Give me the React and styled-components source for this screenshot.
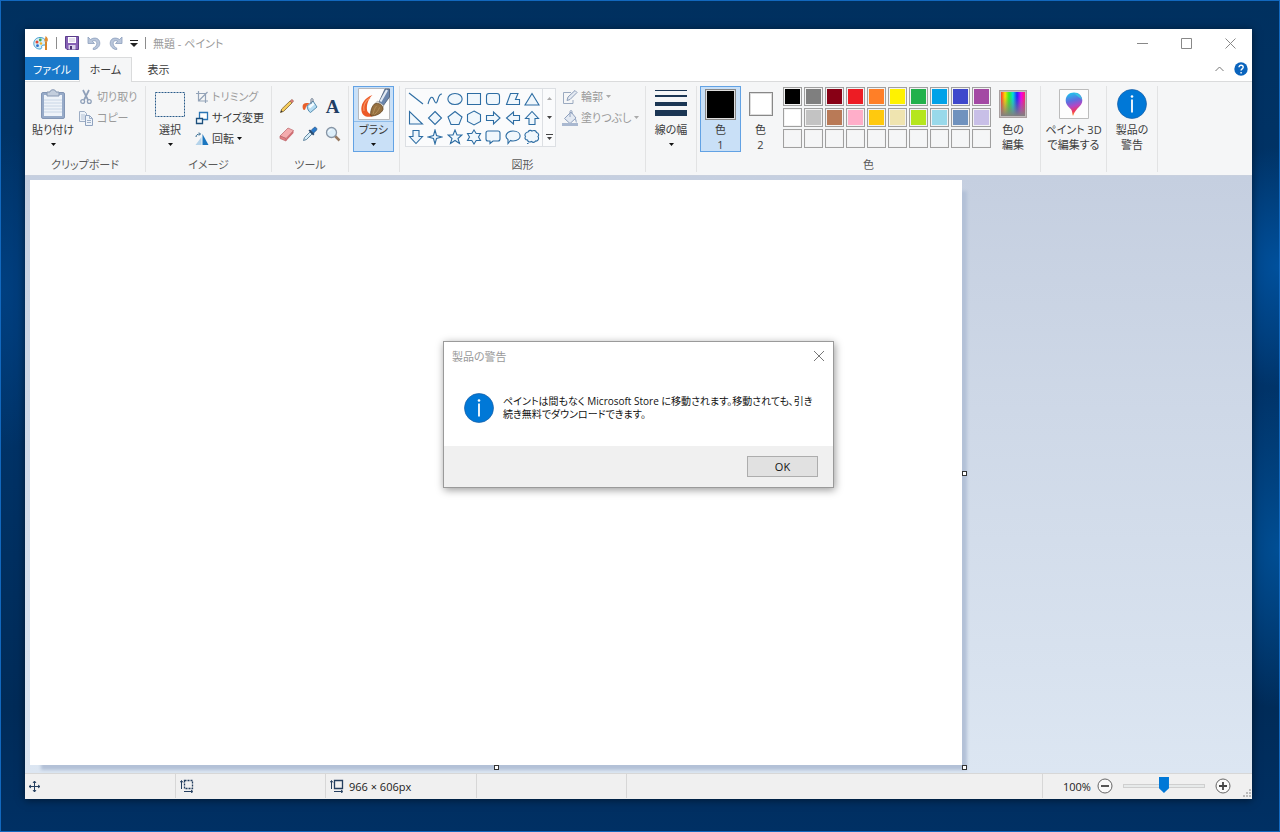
import React, { useState } from "react";
import styled, { createGlobalStyle, css } from "styled-components";

const GlobalStyle = createGlobalStyle`
  * {
    box-sizing: border-box;
  }
  body {
    margin: 0;
  }
  button,
  input {
    font: inherit;
    color: inherit;
    margin: 0;
    padding: 0;
  }
  svg {
    flex-shrink: 0;
  }
`;

const Desktop = styled.div`
  min-height: 100vh;
  display: flex;
  padding: 28px 27px 32px 24px;
  border: 1px solid #1268be;
  background:
    radial-gradient(ellipse 90px 120px at 100% 32%, #00509c, transparent),
    radial-gradient(ellipse 90px 160px at 100% 66%, #004e94, transparent),
    radial-gradient(ellipse 70px 160px at 0% 35%, #003f80, transparent),
    linear-gradient(#00305f, #00356c 40%, #002b58 85%, #003064);
  color: #3c3c3c;
  font-family: "Open Sans", "Noto Sans CJK JP", sans-serif;
  font-size: 11px;
  line-height: 15px;
  font-feature-settings: "palt";
`;

const Window = styled.div`
  position: relative;
  flex: 1;
  min-width: 0;
  display: flex;
  flex-direction: column;
  background: #fff;
  box-shadow: 0 1px 8px rgba(0, 0, 0, 0.5);
`;

const TitleBar = styled.header`
  display: flex;
  align-items: center;
  height: 28px;
  padding-left: 8px;
  gap: 7px;
`;

const PlainButton = styled.button`
  border: 0;
  background: none;
  display: flex;
  align-items: center;
  justify-content: center;
`;

const QuickButton = styled(PlainButton)`
  width: 15px;
`;

const Separator = styled.span`
  width: 1px;
  height: 12px;
  background: #8c8c8c;
`;

const Title = styled.h1`
  margin: 0;
  flex: 1;
  font-size: 11px;
  font-weight: 400;
  color: #999;
`;

const WindowButtons = styled.div`
  display: flex;
`;

const WindowButton = styled(PlainButton)`
  width: 44px;
  height: 28px;
`;

const TabRow = styled.nav`
  display: flex;
  height: 25px;
  border-bottom: 1px solid #dadbdc;
`;

const Tab = styled.button`
  width: 53px;
  height: 25px;
  padding-bottom: 2px;
  border: 1px solid transparent;
  border-bottom: 0;
  background: none;
  white-space: nowrap;

  ${(props) =>
    props.$file &&
    css`
      width: 54px;
      height: 23px;
      padding-bottom: 0;
      background: #1979ca;
      color: #fff;
    `}
  ${(props) =>
    props.$active &&
    css`
      border-color: #dadbdc;
      background: #f5f6f7;
    `}
`;

const TabTools = styled.div`
  display: flex;
  align-items: center;
  gap: 10px;
  margin-left: auto;
  padding-right: 4px;
`;

const Ribbon = styled.div`
  display: flex;
  height: 94px;
  padding: 4px 0 0;
  background: #f5f6f7;
  border-bottom: 1px solid #c8d0de;
`;

const Group = styled.section`
  flex: 0 0 ${(props) => props.$width}px;
  display: flex;
  flex-direction: column;
  border-right: 1px solid #e2e3e4;
  margin-bottom: 3px;
`;

const GroupBody = styled.div`
  display: flex;
  justify-content: ${(props) => (props.$center ? "center" : "flex-start")};
  height: 66px;
  padding-left: ${(props) => (props.$center ? 0 : props.$inset || 4)}px;
  gap: ${(props) => props.$gap || 0}px;
`;

const GroupLabel = styled.div`
  text-align: center;
  line-height: 26px;
  height: 20px;
  color: #5a5a5a;
`;

const BigButton = styled.button`
  display: flex;
  flex-direction: column;
  align-items: center;
  width: ${(props) => props.$width || 44}px;
  height: 66px;
  border: 1px solid ${(props) => (props.$active ? "#62a2e4" : "transparent")};
  background: ${(props) => (props.$active ? "#c9e0f7" : "none")};
  white-space: nowrap;
`;

const BigIcon = styled.span`
  display: flex;
  align-items: center;
  justify-content: center;
  flex: 0 0 35px;
  width: 100%;
  border-bottom: 1px solid ${(props) => (props.$line ? "#8fbdea" : "transparent")};
`;

const SmallColumn = styled.div`
  display: grid;
  grid-auto-rows: 21px;
`;

const SmallButton = styled.button`
  display: flex;
  align-items: center;
  gap: 3px;
  border: 0;
  background: none;
  white-space: nowrap;
  color: ${(props) => (props.disabled ? "#9a9a9a" : "#3c3c3c")};
`;

const ToolGrid = styled.div`
  display: grid;
  grid-template-columns: repeat(3, 23px);
  grid-auto-rows: 28px;
  padding-top: 6px;
`;

const Gallery = styled.div`
  display: flex;
  width: 151px;
  height: 59px;
  margin-top: 2px;
  border: 1px solid #dcdfe3;
  background: #fafbfc;
`;

const ShapeGrid = styled.div`
  flex: 1;
  display: grid;
  grid-template-columns: repeat(7, 1fr);
  grid-template-rows: repeat(3, 1fr);
`;

const GalleryScroll = styled.div`
  width: 13px;
  display: grid;
  grid-template-rows: repeat(3, 1fr);
  border-left: 1px solid #dcdfe3;
`;

const ColorBox = styled.span`
  width: ${(props) => props.$size}px;
  height: ${(props) => props.$size}px;
  border: 1px solid #888;
  background: ${(props) => props.$color};
  box-shadow: inset 0 0 0 1px #ddd;
`;

const Palette = styled.div`
  display: grid;
  grid-template-columns: repeat(10, 19px);
  grid-auto-rows: 19px;
  gap: 2px;
  padding: 1px 0 0 3px;
`;

const Swatch = styled.button`
  border: 1px solid #a0a0a0;
  background: ${(props) => props.$color || "#f5f6f7"};
  box-shadow: inset 0 0 0 1px #f3f3f3;
`;

const Rainbow = styled.span`
  width: 28px;
  height: 28px;
  border: 2px solid #c4bebe;
  outline: 1px solid #a8a0a0;
  outline-offset: -1px;
  background:
    linear-gradient(transparent 20%, #808080),
    linear-gradient(90deg, #f33, #fd0, #3e2, #0dd, #22f, #e0e, #f26);
`;

const Workspace = styled.main`
  flex: 1;
  padding: 4px 5px 8px;
  background: linear-gradient(#c5cfe0, #dce6f2);
`;

const Canvas = styled.div`
  position: relative;
  width: 932px;
  height: 585px;
  background: #fff;
  box-shadow: 8px 8px 3px -3px #b3c1d7;
`;

const Handle = styled.span`
  position: absolute;
  width: 5px;
  height: 5px;
  border: 1px solid #333;
  background: #fff;
  left: ${(props) => props.$left};
  top: ${(props) => props.$top};
`;

const StatusBar = styled.footer`
  display: flex;
  height: 26px;
  padding-bottom: 1px;
  border-top: 1px solid #d7d7d7;
  background: #f0f0f0;
  color: #222;
`;

const StatusCell = styled.div`
  width: ${(props) => props.$width}px;
  flex: ${(props) => (props.$grow ? "1" : "none")};
  display: flex;
  align-items: center;
  gap: 5px;
  padding-left: 4px;
  border-right: 1px solid #d7d7d7;
`;

const ZoomArea = styled.div`
  display: flex;
  align-items: center;
  gap: 6px;
  width: 209px;
  padding-left: 20px;
`;

const ZoomSlider = styled.input`
  appearance: none;
  width: 82px;
  height: 18px;
  margin: 0 4px;
  background: none;

  &::-webkit-slider-runnable-track {
    height: 4px;
    border: 1px solid #cfcfcf;
    background: #e7eaea;
  }
  &::-webkit-slider-thumb {
    appearance: none;
    width: 10px;
    height: 16px;
    margin-top: -8px;
    background: #0078d7;
    clip-path: polygon(0 0, 100% 0, 100% 70%, 50% 100%, 0 70%);
  }
`;

const Grip = styled.span`
  display: flex;
  align-self: flex-end;
  margin-left: auto;
`;

const DialogLayer = styled.div`
  position: absolute;
  inset: 0;
  display: grid;
  place-items: center;
`;

const Dialog = styled.div`
  width: 391px;
  border: 1px solid #9a9a9a;
  background: #fff;
  box-shadow: 1px 2px 8px rgba(0, 0, 0, 0.4);
`;

const DialogTitle = styled.div`
  display: flex;
  justify-content: space-between;
  align-items: center;
  height: 29px;
  padding: 0 8px;
  color: #999;
`;

const DialogBody = styled.div`
  display: flex;
  align-items: center;
  gap: 9px;
  height: 75px;
  padding: 0 20px;
  color: #111;
`;

const DialogText = styled.p`
  margin: 0;
  font-size: 10px;
  line-height: 13px;
  white-space: nowrap;
`;

const DialogFooter = styled.div`
  display: flex;
  justify-content: flex-end;
  align-items: center;
  height: 41px;
  padding-right: 15px;
  background: #f0f0f0;
`;

const OkButton = styled.button`
  width: 71px;
  height: 21px;
  border: 1px solid #adadad;
  background: #e1e1e1;
  color: #111;
`;

const Svg = ({ size = 16, w, h, children, ...rest }) => (
  <svg
    width={w || size}
    height={h || size}
    viewBox={`0 0 ${w || size} ${h || size}`}
    fill="none"
    aria-hidden="true"
    {...rest}
  >
    {children}
  </svg>
);

const Arrow = ({ color = "#111", up }) => (
  <Svg w={5} h={3}>
    <path d={up ? "M0 3h5L2.5 0z" : "M0 0h5L2.5 3z"} fill={color} />
  </Svg>
);

const ArrowRow = styled.span`
  display: flex;
  align-items: center;
  height: 14px;
`;

const InfoIcon = () => (
  <Svg size={30}>
    <circle cx="15" cy="15" r="14.5" fill="#0078d7" stroke="#1a5fa5" strokeWidth="0.7" />
    <circle cx="15" cy="7.500" r="1.300" fill="#fff" />
    <path d="M15 10.500v13" stroke="#fff" strokeWidth="1.800" />
  </Svg>
);

const PaletteIcon = () => (
  <Svg size={16}>
    <path d="M7 2.5C3 2.5.8 5.500.8 8.500c0 3 2.500 5.500 6 5.500 2 0 2-1.400 1.800-2.300-.2-1.200 1-1.700 2.400-1.600C15 10.300 14 2.500 7 2.500z" fill="#d5edf9" stroke="#3f9ccc" />
    <circle cx="4" cy="7" r="1.500" fill="#e24b35" />
    <circle cx="7.300" cy="5" r="1.400" fill="#4aa84a" />
    <circle cx="4.500" cy="10.700" r="1.400" fill="#2c6fc9" />
    <circle cx="8" cy="8.500" r="1.200" fill="#f1b52b" />
    <path d="M13 6.500V15" stroke="#d98628" strokeWidth="2" />
    <path d="M11.500 6.500c-.5-2 1-2.500 1-5.500 2 1 3 3.500 2 5.500z" fill="#e08b31" />
  </Svg>
);

const SaveIcon = () => (
  <Svg size={14}>
    <path d="M.5.5h13v13H2L.5 12z" fill="#8661b5" stroke="#5b3d8c" />
    <path d="M3 1h8v6H3z" fill="#fff" />
    <path d="M4 3h6M4 5h6" stroke="#c9bfdc" />
    <path d="M3.500 9h7v4.500h-7z" fill="#d9d0ea" />
    <path d="M5 10h2v3.500H5z" fill="#493070" />
  </Svg>
);

const UndoIcon = ({ flip }) => (
  <Svg size={14} transform={flip ? "scale(-1 1)" : undefined}>
    <path d="M1 1v6.500h6.500L5.300 5.300c2.500-1.400 4.500-.3 4.500 2.200 0 2-1.300 3.500-3.500 4.500v1.800c4-.8 6.500-3.300 6.500-6.600C12.800 2.500 8 .5 3.500 3.500z" fill="#b9c6db" stroke="#8d9fbd" strokeWidth="0.8" />
  </Svg>
);

const PasteIcon = () => (
  <Svg w={26} h={30}>
    <rect x="1.500" y="3.500" width="23" height="26" rx="1.500" fill="#97abc9" stroke="#8396b5" />
    <path d="M4 6h18v21H4z" fill="#eef3f9" />
    <path d="M4 11h18M4 14h18M4 17h18M4 20h18M4 23h18" stroke="#c9d6e6" />
    <path d="M7 7V3h3c0-3 6-3 6 0h3v4z" fill="#c3cedd" stroke="#8698b3" />
  </Svg>
);

const CutIcon = () => (
  <Svg>
    <path d="M5 1l5 10M11 1L6 11" stroke="#8fa0b9" strokeWidth="1.700" />
    <circle cx="4.700" cy="12.500" r="1.900" stroke="#8fa0b9" strokeWidth="1.300" />
    <circle cx="11.300" cy="12.500" r="1.900" stroke="#8fa0b9" strokeWidth="1.300" />
  </Svg>
);

const CopyIcon = () => (
  <Svg>
    <path d="M1.500 1.500h5l2 2v8h-7z" fill="#eef3f9" stroke="#9dadc4" />
    <path d="M3 5h4M3 7h4M3 9h4" stroke="#b5c3d6" />
    <path d="M7.500 5.500h4l3 3v7h-7z" fill="#eef3f9" stroke="#8fa2bf" />
    <path d="M11.500 5.500v3h3M9 10.500h4M9 12.500h4" stroke="#9fb0c8" />
  </Svg>
);

const SelectIcon = () => (
  <Svg w={30} h={25}>
    <rect x="0.500" y="0.500" width="29" height="24" stroke="#2a5c8a" strokeDasharray="2 1" />
  </Svg>
);

const CropIcon = () => (
  <Svg size={14}>
    <path d="M3.500 1v10H13M1 3.500h9.500V13M4 10.500L12.500 2" stroke="#93a3b8" strokeWidth="1.200" />
  </Svg>
);

const ResizeIcon = () => (
  <Svg size={14}>
    <path d="M4.500 1.500h8v7h-8z" fill="#fff" stroke="#2b76b5" strokeWidth="1.300" />
    <path d="M1.500 7.500h6v5h-6z" fill="#eef6fc" stroke="#1d4f7b" strokeWidth="1.300" />
  </Svg>
);

const RotateIcon = () => (
  <Svg size={14}>
    <path d="M6.500 13H0.500L6.500 5z" fill="#b4d3ea" />
    <path d="M7.500 13V2L13.500 13z" fill="#1b76bf" />
    <path d="M1 5c0-2 1.500-3 4-3M4 .500L5.500 2 4 3.500" stroke="#31688f" />
  </Svg>
);

const PencilIcon = () => (
  <Svg>
    <path d="M1.500 14.500l1.200-3.500L11 3l2 2-8.300 8.300z" fill="#f4cc5c" stroke="#7d6234" strokeWidth="0.800" />
    <path d="M11 3l1.300-1.300c1-.7 2.700 1 2 2L13 5z" fill="#dc7d77" stroke="#965" strokeWidth="0.500" />
    <path d="M1.500 14.500l.8-2.200 1.400 1.400z" fill="#333" />
  </Svg>
);

const BucketIcon = ({ gray }) =>
  gray ? (
    <Svg>
      <path d="M2.500 8.500L9 2l5 6-6 5.500z" fill="#e3e9f2" stroke="#8ea0bd" />
      <path d="M8 7V1.500c0-1.300 2-1.300 2 0V4" stroke="#8ea0bd" />
      <path d="M13 8c2 1.500 2 3.500 1.500 5-1-1-1.500-2.500-1.500-5z" fill="#9fb0cb" />
      <path d="M0 13h16v3H0z" fill="#a9b8d0" />
    </Svg>
  ) : (
    <Svg>
      <path d="M5 8l6-5 4 6-6.500 5.500c-2-1-3-3.500-3.500-6.500z" fill="#b5dcf2" stroke="#4a83a8" strokeWidth="0.900" />
      <path d="M6.500 8.500L11 4.500l1.500 2-4.500 4z" fill="#f3fbff" />
      <path d="M9 6V1.500c0-1.200 2-1.200 2 0V4" stroke="#66758a" />
      <path d="M1 11C-.500 6.500 2 4 7.500 5.500 5 7 4 8 3.500 10.500c-.5 1.800-2 2-2.500.5z" fill="#e8602c" />
    </Svg>
  );

const EraserIcon = () => (
  <Svg>
    <path d="M1 10L9 2l5.500 2.500-7.500 8z" fill="#f4acae" stroke="#b9656a" strokeWidth="0.700" />
    <path d="M1 10l6 2.500v2.500l-6-2.500z" fill="#e57f83" stroke="#b9656a" strokeWidth="0.700" />
    <path d="M7 12.500l7.500-8V7L7 15z" fill="#cf6a70" />
  </Svg>
);

const PickerIcon = () => (
  <Svg>
    <path d="M1.500 14.500l1-3L8 6l2 2-5.500 5.500z" fill="#d5ecf8" stroke="#547a96" strokeWidth="0.900" />
    <path d="M6.500 4.500l1.500-1L12.500 8 11.200 9.500z" fill="#27496f" />
    <path d="M9 4.500L12 1.500c1.700-1 3.700 1 2.500 2.700l-3 3z" fill="#2a7acb" stroke="#1c4472" strokeWidth="0.600" />
  </Svg>
);

const MagnifierIcon = () => (
  <Svg>
    <path d="M9.500 9.500l5 5" stroke="#977a62" strokeWidth="2.500" />
    <circle cx="6.500" cy="6.500" r="5" fill="#dceefa" stroke="#8795a5" strokeWidth="1.300" />
    <path d="M3.500 6C4 4.500 5 3.700 6.500 3.700" stroke="#fff" />
  </Svg>
);

const TextToolGlyph = styled.span`
  font-family: "Liberation Serif", serif;
  font-size: 19px;
  font-weight: 700;
  color: #1f3d63;
`;

const BrushIcon = () => (
  <Svg size={32}>
    <path d="M.5.500h31v31H.5z" fill="#fdfdfd" stroke="#b7b9bd" />
    <path d="M14.500 7C6 10 2.500 17 3.500 23c1 6 8 8 15 3-5 1-9-.500-9.500-4C8.500 17 10 11 14.500 7z" fill="#ec5a28" />
    <path d="M12 10c-5 3-7 8-6 13" stroke="#f79462" strokeWidth="1.200" />
    <path d="M21 14L27 1h4.500v8L25 18z" fill="#6b86ad" stroke="#3f5069" strokeWidth="0.700" />
    <path d="M22.500 13.500L29 2" stroke="#e2eaf4" strokeWidth="2.200" />
    <path d="M19.500 13l6.500 4.500-2 3.500-7.500-5z" fill="#dcdcd8" stroke="#888" strokeWidth="0.500" />
    <path d="M13 28c-1-2 0-9 3.500-12 4-2 9 1.500 8.500 5.500-1.500 4-7 6.500-12 6.500z" fill="#96703f" stroke="#65441f" strokeWidth="0.800" />
    <path d="M15 26c1-3 1.500-6 3.500-8M16.500 26.500c2-2 4-4 5-7" stroke="#bb9560" strokeWidth="0.800" />
  </Svg>
);

const OutlineIcon = () => (
  <Svg>
    <path d="M9 3.500H1.500v11H11V11" stroke="#9baac0" />
    <path d="M5 11.500l1-3.500L13 1.500l2 2L8 10.500z" fill="#e4eaf2" stroke="#8c9db8" />
  </Svg>
);

const LinesIcon = () => (
  <Svg w={32} h={28}>
    <path d="M0 .500h32" stroke="#1b3654" />
    <path d="M0 6h32" stroke="#1b3654" strokeWidth="2" />
    <path d="M0 14h32" stroke="#1b3654" strokeWidth="4" />
    <path d="M0 23h32" stroke="#1b3654" strokeWidth="6" />
  </Svg>
);

const Paint3dIcon = () => (
  <Svg size={30}>
    <defs>
      <linearGradient id="drop" x1="0.300" y1="0" x2="0.500" y2="1">
        <stop offset="0" stopColor="#1cc5ee" />
        <stop offset="0.350" stopColor="#5c6fe0" />
        <stop offset="0.600" stopColor="#b546c4" />
        <stop offset="0.800" stopColor="#f0395c" />
        <stop offset="1" stopColor="#f9a01b" />
      </linearGradient>
    </defs>
    <path d="M.500.500h29v29H.500z" fill="#fdfdfd" stroke="#bcbcbc" />
    <path d="M15 3.500c5 0 8.300 3.500 8.300 8 0 6-6.300 6.500-9.300 15.500-1-2-.5-4-1.500-6-1.500-2.500-5.800-4.500-5.800-9.500 0-4.500 3.300-8 8.300-8z" fill="url(#drop)" />
    <path d="M15 4c4.500 0 7.800 3 8 7-2-2.500-4.500-3.500-8-7z" fill="#35d5dd" opacity="0.700" />
  </Svg>
);

const shapes = [
  ["直線", "M1 2l14 11"],
  ["曲線", "M1 13c2-7 4-9 6-4s3 3 4-1 2-5 4-5"],
  ["楕円", "M8 2.500c9.500 0 9.500 11 0 11s-9.500-11 0-11z"],
  ["四角形", "M1.500 2.500h13v11h-13z"],
  ["角丸四角形", "M4 2.500h8q2.500 0 2.500 2.500v6q0 2.500-2.500 2.500H4q-2.500 0-2.500-2.500V5Q1.500 2.500 4 2.500z"],
  ["多角形", "M5.500 2.500h7.500L10.500 8.500h4v5h-13z"],
  ["三角形", "M8 2.500l7 11.500H1z"],
  ["直角三角形", "M1.500 1.500v12.500h13z"],
  ["ひし形", "M8 1.500L14.500 8 8 14.500 1.500 8z"],
  ["五角形", "M8 1.500l7 5.500-3 7.500H4L1 7z"],
  ["六角形", "M8 1l6.500 3.500v7L8 15l-6.500-3.500v-7z"],
  ["右矢印", "M1.500 5.500h7V2L15 8l-6.500 6v-3.500h-7z"],
  ["左矢印", "M14.500 5.500h-6V2L1.500 8l7 6v-3.500h6z"],
  ["上矢印", "M5 14.500V8.500H1.500L8 1.500l6.500 7H11v6z"],
  ["下矢印", "M5 1.500v6H1.500L8 14.500l6.500-7H11v-6z"],
  ["四方星", "M8 1l1.500 5.500L15 8l-5.500 1.500L8 15 6.500 9.500 1 8l5.500-1.500z"],
  ["五方星", "M8 1l2 5h5l-4 3.500 1.500 5L8 11.500l-4.500 3 1.500-5L1 6h5z"],
  ["六方星", "M8 1l2.200 3.500h4.300L12.500 8l2 3.500h-4.300L8 15l-2.200-3.500H1.500L3.500 8l-2-3.500h4.300z"],
  ["角丸吹き出し", "M3 2h10q2 0 2 2v6q0 2-2 2H8l-3 2.500V12H3q-2 0-2-2V4q0-2 2-2z"],
  ["楕円吹き出し", "M8 2c9.500 0 9.500 10 0 10-1 0-2-.2-2.500-.5L3 14.500V10.500C-1 7.500 1.500 2 8 2z"],
  ["雲形吹き出し", "M4 3c1-2 3-2 4-1 2-1 4-.500 4.500 1.500 2.500.500 2.500 3 1.500 4 1.500 2.500-.500 5-2.500 4.500-1 2-3 1.500-4 .500-2 1-3.500.500-4-1.500C1 11 .500 9 1.500 7.500 0 5.500 2 3 4 3zM3 14.500h1.500"],
];

const palette = [
  "#000000", "#7f7f7f", "#880015", "#ed1c24", "#ff7f27", "#fff200", "#22b14c", "#00a2e8", "#3f48cc", "#a349a4",
  "#ffffff", "#c3c3c3", "#b97a57", "#ffaec9", "#ffc90e", "#efe4b0", "#b5e61d", "#99d9ea", "#7092be", "#c8bfe7",
  null, null, null, null, null, null, null, null, null, null,
];

const RoundIcon = ({ plus }) => (
  <Svg>
    <circle cx="8" cy="8" r="7" fill="#fafafa" stroke="#666" />
    <path d={plus ? "M4 8h8M8 4v8" : "M4 8h8"} stroke="#444" strokeWidth="1.800" />
  </Svg>
);

const SizeIcon = ({ dashed }) => (
  <Svg w={14} h={14}>
    <path d="M4.500 1.500h8v8h-8z" stroke="#243f5f" strokeWidth="1.300" strokeDasharray={dashed ? "2 1" : undefined} />
    <path d="M1.500 10V2M0 3.500L1.500 1.500 3 3.500M4 12.500h8M11 11l2 1.500-2 1.500" stroke="#243f5f" />
  </Svg>
);

const App = () => {
  const [tab, setTab] = useState("home");
  const [color, setColor] = useState("#000000");
  const [zoom, setZoom] = useState(50);
  const [showDialog, setShowDialog] = useState(true);

  return (
    <Desktop lang="ja">
      <GlobalStyle />
      <Window>
        <TitleBar>
          <PaletteIcon />
          <Separator />
          <QuickButton aria-label="上書き保存"><SaveIcon /></QuickButton>
          <QuickButton aria-label="元に戻す"><UndoIcon /></QuickButton>
          <QuickButton aria-label="やり直し"><UndoIcon flip /></QuickButton>
          <PlainButton aria-label="クイック アクセス">
            <Svg w={8} h={7}><path d="M0 .500h8" stroke="#222" /><path d="M0 3h8L4 7z" fill="#222" /></Svg>
          </PlainButton>
          <Separator />
          <Title>無題 - ペイント</Title>
          <WindowButtons>
            <WindowButton aria-label="最小化"><Svg size={11}><path d="M0 5.500h11" stroke="#888" /></Svg></WindowButton>
            <WindowButton aria-label="最大化"><Svg size={11}><path d="M.500.500h10v10H.500z" stroke="#888" /></Svg></WindowButton>
            <WindowButton aria-label="閉じる"><Svg size={11}><path d="M.500.500l10 10M10.500.500l-10 10" stroke="#888" /></Svg></WindowButton>
          </WindowButtons>
        </TitleBar>
        <TabRow>
          <Tab $file>ファイル</Tab>
          <Tab $active={tab === "home"} onClick={() => setTab("home")}>ホーム</Tab>
          <Tab $active={tab === "view"} onClick={() => setTab("view")}>表示</Tab>
          <TabTools>
            <PlainButton aria-label="リボンの最小化"><Svg w={9} h={6}><path d="M.500 5l4-4 4 4" stroke="#777" /></Svg></PlainButton>
            <PlainButton aria-label="ヘルプ">
              <Svg size={14}>
                <circle cx="7" cy="7" r="6.700" fill="#0a64bd" />
                <path d="M5 5.300c0-2.700 4.200-2.600 4.200 0 0 1.500-2.100 1.600-2.100 3.200M7.100 10v1.500" stroke="#fff" strokeWidth="1.400" />
              </Svg>
            </PlainButton>
          </TabTools>
        </TabRow>
        <Ribbon>
          <Group $width={121}>
            <GroupBody $inset={6} $gap={3}>
              <BigButton>
                <BigIcon><PasteIcon /></BigIcon>
                貼り付け
                <ArrowRow><Arrow /></ArrowRow>
              </BigButton>
              <SmallColumn>
                <SmallButton disabled><CutIcon />切り取り</SmallButton>
                <SmallButton disabled><CopyIcon />コピー</SmallButton>
              </SmallColumn>
            </GroupBody>
            <GroupLabel>クリップボード</GroupLabel>
          </Group>
          <Group $width={126}>
            <GroupBody $inset={2} $gap={3}>
              <BigButton>
                <BigIcon><SelectIcon /></BigIcon>
                選択
                <ArrowRow><Arrow /></ArrowRow>
              </BigButton>
              <SmallColumn>
                <SmallButton disabled><CropIcon />トリミング</SmallButton>
                <SmallButton><ResizeIcon />サイズ変更</SmallButton>
                <SmallButton><RotateIcon />回転<Arrow /></SmallButton>
              </SmallColumn>
            </GroupBody>
            <GroupLabel>イメージ</GroupLabel>
          </Group>
          <Group $width={77}>
            <GroupBody $inset={3}>
              <ToolGrid>
                <PlainButton aria-label="鉛筆"><PencilIcon /></PlainButton>
                <PlainButton aria-label="塗りつぶし"><BucketIcon /></PlainButton>
                <PlainButton aria-label="テキスト"><TextToolGlyph>A</TextToolGlyph></PlainButton>
                <PlainButton aria-label="消しゴム"><EraserIcon /></PlainButton>
                <PlainButton aria-label="色の選択"><PickerIcon /></PlainButton>
                <PlainButton aria-label="拡大鏡"><MagnifierIcon /></PlainButton>
              </ToolGrid>
            </GroupBody>
            <GroupLabel>ツール</GroupLabel>
          </Group>
          <Group $width={51}>
            <GroupBody $inset={4}>
              <BigButton $active $width={41}>
                <BigIcon $line><BrushIcon /></BigIcon>
                ブラシ
                <ArrowRow><Arrow /></ArrowRow>
              </BigButton>
            </GroupBody>
          </Group>
          <Group $width={246}>
            <GroupBody $inset={5} $gap={6}>
              <Gallery>
                <ShapeGrid>
                  {shapes.map(([name, d]) => (
                    <PlainButton key={name} aria-label={name}>
                      <Svg><path d={d} fill={name.endsWith("線") ? "none" : "#f0f7fc"} stroke="#2d6da3" strokeWidth="1.100" /></Svg>
                    </PlainButton>
                  ))}
                </ShapeGrid>
                <GalleryScroll>
                  <PlainButton aria-label="上へ"><Arrow up color="#aaa" /></PlainButton>
                  <PlainButton aria-label="下へ"><Arrow color="#444" /></PlainButton>
                  <PlainButton aria-label="その他">
                    <Svg w={7} h={6}><path d="M0 .500h7" stroke="#444" /><path d="M1 3h5L3.500 6z" fill="#444" /></Svg>
                  </PlainButton>
                </GalleryScroll>
              </Gallery>
              <SmallColumn>
                <SmallButton disabled><OutlineIcon />輪郭<Arrow color="#aaa" /></SmallButton>
                <SmallButton disabled><BucketIcon gray />塗りつぶし<Arrow color="#aaa" /></SmallButton>
              </SmallColumn>
            </GroupBody>
            <GroupLabel>図形</GroupLabel>
          </Group>
          <Group $width={51}>
            <GroupBody $center>
              <BigButton>
                <BigIcon><LinesIcon /></BigIcon>
                線の幅
                <ArrowRow><Arrow /></ArrowRow>
              </BigButton>
            </GroupBody>
          </Group>
          <Group $width={344}>
            <GroupBody $inset={3}>
              <BigButton $active $width={41}>
                <BigIcon><ColorBox $size={31} $color={color} /></BigIcon>
                <span>色<br />1</span>
              </BigButton>
              <BigButton $width={39}>
                <BigIcon><ColorBox $size={24} $color="#fff" /></BigIcon>
                <span>色<br />2</span>
              </BigButton>
              <Palette>
                {palette.map((c, i) => (
                  <Swatch key={i} $color={c} aria-label={c || "空"} onClick={() => c && setColor(c)} />
                ))}
              </Palette>
              <BigButton>
                <BigIcon><Rainbow /></BigIcon>
                <span>色の<br />編集</span>
              </BigButton>
            </GroupBody>
            <GroupLabel>色</GroupLabel>
          </Group>
          <Group $width={66}>
            <GroupBody $center>
              <BigButton $width={62}>
                <BigIcon><Paint3dIcon /></BigIcon>
                <span>ペイント 3D<br />で編集する</span>
              </BigButton>
            </GroupBody>
          </Group>
          <Group $width={51}>
            <GroupBody $center>
              <BigButton onClick={() => setShowDialog(true)}>
                <BigIcon><InfoIcon /></BigIcon>
                <span>製品の<br />警告</span>
              </BigButton>
            </GroupBody>
          </Group>
        </Ribbon>
        <Workspace>
          <Canvas>
            <Handle $left="100%" $top="calc(50% - 2px)" />
            <Handle $left="calc(50% - 2px)" $top="100%" />
            <Handle $left="100%" $top="100%" />
          </Canvas>
        </Workspace>
        <StatusBar>
          <StatusCell $width={151}>
            <Svg size={11}>
              <path d="M5.500 0v11M0 5.500h11M4 2l1.500-2L7 2M4 9l1.500 2L7 9M2 4L0 5.500 2 7M9 4l2 1.500L9 7" stroke="#243f5f" />
            </Svg>
          </StatusCell>
          <StatusCell $width={150}><SizeIcon dashed /></StatusCell>
          <StatusCell $width={151}><SizeIcon />966 × 606px</StatusCell>
          <StatusCell $width={150} />
          <StatusCell $grow />
          <ZoomArea>
            <label htmlFor="zoom">100%</label>
            <PlainButton aria-label="縮小" onClick={() => setZoom(zoom - 10)}><RoundIcon /></PlainButton>
            <ZoomSlider id="zoom" type="range" value={zoom} onChange={(e) => setZoom(+e.target.value)} />
            <PlainButton aria-label="拡大" onClick={() => setZoom(zoom + 10)}><RoundIcon plus /></PlainButton>
            <Grip>
              <Svg size={9}>
                <path d="M6 0h2v2H6zM3 3h2v2H3zM6 3h2v2H6zM0 6h2v2H0zM3 6h2v2H3zM6 6h2v2H6z" fill="#bbb" />
              </Svg>
            </Grip>
          </ZoomArea>
        </StatusBar>
        {showDialog && (
          <DialogLayer>
            <Dialog role="dialog" aria-labelledby="dialog-title">
              <DialogTitle>
                <span id="dialog-title">製品の警告</span>
                <PlainButton aria-label="閉じる" onClick={() => setShowDialog(false)}>
                  <Svg size={12}><path d="M1 1l10 10M11 1L1 11" stroke="#777" /></Svg>
                </PlainButton>
              </DialogTitle>
              <DialogBody>
                <InfoIcon />
                <DialogText>
                  ペイントは間もなく Microsoft Store に移動されます。移動されても、引き<br />
                  続き無料でダウンロードできます。
                </DialogText>
              </DialogBody>
              <DialogFooter>
                <OkButton onClick={() => setShowDialog(false)}>OK</OkButton>
              </DialogFooter>
            </Dialog>
          </DialogLayer>
        )}
      </Window>
    </Desktop>
  );
};

export default App;
